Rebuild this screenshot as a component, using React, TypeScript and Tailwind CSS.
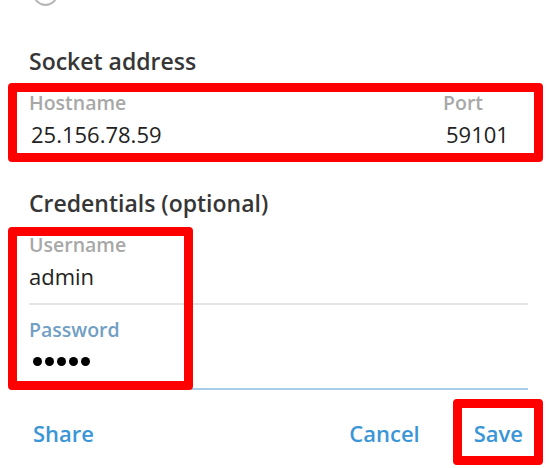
export default function App() {
  return (
    <div className="relative h-[468px] w-[550px] overflow-hidden bg-white font-['Open_Sans',sans-serif]">
      {/* Radio button, cut off at the top */}
      <div className="ml-[33px] mt-[-19px] h-[25px] w-[25px] rounded-full border-2 border-[#b5b5b5]" />

      <div className="pl-[29px] pr-[22px]">
        <h2 className="mt-[40px] text-[23px] font-semibold leading-[30px] text-[#363636]">
          Socket address
        </h2>

        <div className="mt-[15px] flex">
          <div className="flex-1">
            <div className="text-[19.5px] font-semibold leading-[24px] text-[#a8a8a8]">Hostname</div>
            <div className="mt-[4px] pl-[2px] text-[22px] leading-[30px] text-[#222]">25.156.78.59</div>
          </div>
          <div className="w-[85px]">
            <div className="text-[19.5px] font-semibold leading-[24px] text-[#a8a8a8]">Port</div>
            <div className="mt-[4px] pl-[3px] text-[22px] leading-[30px] text-[#222]">59101</div>
          </div>
        </div>

        <h2 className="mt-[39px] text-[23px] font-semibold leading-[30px] text-[#363636]">
          Credentials (optional)
        </h2>

        <div className="mt-[15px] text-[19.5px] font-semibold leading-[24px] text-[#a8a8a8]">Username</div>
        <div className="mt-[4px] text-[22px] leading-[30px] text-[#222]">admin</div>
        <div className="mt-[12px] h-[2px] bg-[#e4e4e4]" />

        <div className="mt-[13px] text-[19.5px] font-semibold leading-[24px] text-[#71a0c4]">Password</div>
        <div className="mt-[4px] flex h-[30px] items-center gap-[3px] pl-[4px]">
          {[0, 1, 2, 3, 4].map((i) => (
            <span key={i} className="h-[9px] w-[9px] rounded-full bg-black" />
          ))}
        </div>
        <div className="mt-[12px] h-[2px] bg-[#a8cde8]" />
      </div>

      <div className="mt-[28px] flex items-center pl-[33px] pr-[27px] text-[22px] font-semibold leading-[30px] text-[#3a96d6]">
        <button className="font-semibold">Share</button>
        <div className="flex-1" />
        <button className="font-semibold">Cancel</button>
        <button className="ml-[54px] font-semibold">Save</button>
      </div>

      {/* Red annotation boxes */}
      <div className="absolute left-[8px] top-[83px] h-[79px] w-[535px] rounded-[4px] border-[9px] border-[#ff0000]" />
      <div className="absolute left-[8px] top-[227px] h-[163px] w-[185px] rounded-[4px] border-[9px] border-[#ff0000]" />
      <div className="absolute left-[453px] top-[399px] h-[66px] w-[90px] rounded-[4px] border-[9px] border-[#ff0000]" />
    </div>
  );
}
